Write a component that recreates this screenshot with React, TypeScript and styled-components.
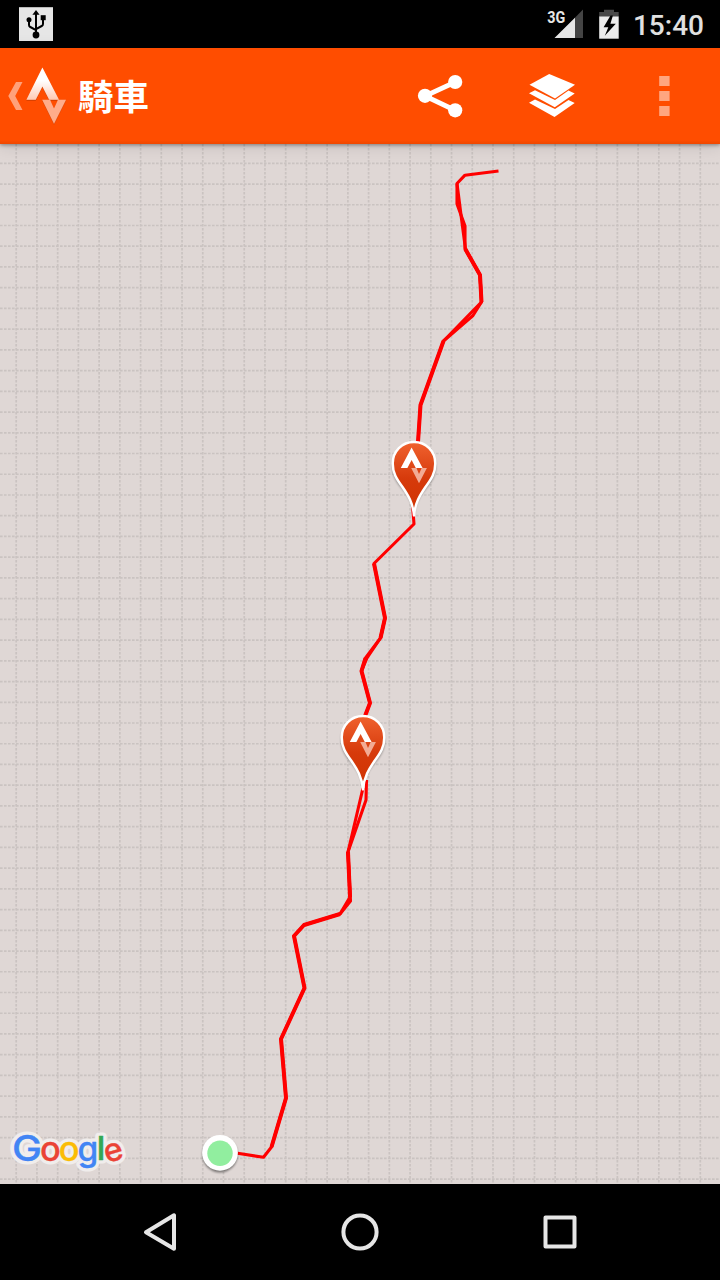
import React from "react";
import styled, { createGlobalStyle } from "styled-components";

const GlobalStyle = createGlobalStyle`
  body {
    margin: 0;
    background: #000;
  }
  svg {
    display: block;
  }
`;

const Screen = styled.div`
  width: 720px;
  height: 1280px;
  display: flex;
  flex-direction: column;
  overflow: hidden;
  font-family: Roboto, "Noto Sans CJK TC", sans-serif;
`;

const StatusBar = styled.div`
  height: 48px;
  display: flex;
  align-items: center;
  justify-content: space-between;
  padding: 0 16px 0 19px;
  background: #000;
`;

const StatusIcons = styled.div`
  display: flex;
  align-items: center;
`;

const Clock = styled.span`
  margin-left: 14px;
  padding-top: 3px;
  font-size: 28px;
  font-weight: 500;
  line-height: 45px;
  color: #e0e0e0;
`;

const ActionBar = styled.header`
  position: relative;
  z-index: 1;
  height: 96px;
  flex-shrink: 0;
  display: flex;
  align-items: center;
  justify-content: space-between;
  background: linear-gradient(#ff4d00 92px, #ee4800);
  box-shadow: 0 1px 4px rgba(0, 0, 0, 0.4), 0 2px 16px rgba(0, 0, 0, 0.12);
`;

const HomeButton = styled.div`
  display: flex;
  align-items: center;
`;

const Title = styled.h1`
  margin: 0 0 2px 10px;
  font-family: "Noto Sans CJK TC", sans-serif;
  font-size: 35.5px;
  font-weight: 700;
  line-height: 94px;
  color: #fff;
`;

const Actions = styled.div`
  display: flex;
`;

const ActionButton = styled.div`
  width: 112px;
  height: 96px;
`;

const MapArea = styled.main`
  position: relative;
  height: 1040px;
  flex-shrink: 0;
  background: #dfd7d5;
`;

const Pin = styled.svg<{ $x: number; $y: number }>`
  position: absolute;
  left: ${(p) => p.$x}px;
  top: ${(p) => p.$y}px;
`;

const NavBar = styled.nav`
  height: 96px;
  display: flex;
  align-items: center;
  justify-content: center;
  gap: 152px;
  background: #000;
`;

const GRID = 20.73;
const columns = Array.from({ length: 34 }, (_, i) => 16.2 + i * GRID);
const rows = Array.from({ length: 50 }, (_, i) => 163.3 + i * GRID);

const tracks = [
  "498.5,171 465,175.2 457,183.5 457,204 465,226 465,249 480,275 481.5,302 473,315.5 443.5,341 420.5,405 418,442",
  "457,183.5 461,215 465.5,249 480,275 481.5,302 443.5,341",
  "412.5,505 414,524 374,563.5 385,618 380.5,638 365.5,658 361.5,671 370,703 365,716",
  "385,618 380.5,638 367,658 361.5,671",
  "363,788 348,852 350,897 340,914 304,925 294,936 304.5,988 281,1039 286,1098 271.5,1147 263.5,1157.3 236,1153",
  "366.5,780 366,800 348,852 350.5,901 340,914",
];

const wideTracks = [
  "465.3,249 480,275 481.5,302",
  "443.5,341 420.5,405 418,442",
  "374,563.5 385,618 380.5,638",
  "365.5,658 361.5,671 370,703 365,716",
  "348,852 350,897",
  "340,914 304,925 294,936 304.5,988 281,1039 286,1098 271.5,1147",
];

function MapCanvas() {
  return (
    <svg width="720" height="1040" viewBox="0 144 720 1040">
      <g stroke="#cac3c1" strokeWidth="1.7" strokeDasharray="2.6 1.4">
        {columns.map((x) => (
          <line key={x} x1={x} x2={x} y1="144" y2="1184" />
        ))}
        {rows.map((y) => (
          <line key={y} x1="0" x2="720" y1={y} y2={y} />
        ))}
      </g>
      <g fill="none" stroke="#f00" strokeLinejoin="round">
        {tracks.map((points) => (
          <polyline key={points} points={points} strokeWidth="3.1" />
        ))}
        {wideTracks.map((points) => (
          <polyline key={points} points={points} strokeWidth="4" />
        ))}
      </g>
    </svg>
  );
}

function StravaPin({ x, y }: { x: number; y: number }) {
  return (
    <Pin $x={x} $y={y} width="56" height="88" viewBox="0 0 56 88">
      <defs>
        <linearGradient id="pin" x1="0" y1="0" x2="0" y2="1">
          <stop offset="0" stopColor="#f0622f" />
          <stop offset="0.5" stopColor="#d63a0b" />
          <stop offset="1" stopColor="#d03200" />
        </linearGradient>
        <filter id="soft" x="-20%" y="-20%" width="140%" height="140%">
          <feGaussianBlur stdDeviation="1.3" />
        </filter>
      </defs>
      <path
        d="M28 81C27 69 22 61 16 54C10 47 6 40 6 31C6 18 16 8 28 8S50 18 50 31C50 40 46 47 40 54C34 61 29 69 28 81Z"
        fill="#000"
        opacity="0.35"
        filter="url(#soft)"
      />
      <path
        d="M28 80.5C27 68 22 60 16.5 52C10.5 44 6.7 38 6.7 28.5C6.7 16 16 7 28 7S49.3 16 49.3 28.5C49.3 38 45.5 44 39.5 52C34 60 29 68 28 80.5Z"
        fill="url(#pin)"
        stroke="#fff"
        strokeWidth="2.5"
        strokeLinejoin="round"
      />
      <path d="M25.6 12.6L36.6 33H29.8L25.6 25L21.4 33H14.8Z" fill="#fff" />
      <path d="M25.2 33H30.5L33 39L35.7 33H40.9L33 48.3Z" fill="#f2ab94" />
    </Pin>
  );
}

function StartPoint() {
  return (
    <Pin $x={196} $y={984} width="48" height="50" viewBox="0 0 48 50">
      <circle cx="24" cy="26.8" r="17.7" fill="#000" opacity="0.45" filter="url(#soft)" />
      <circle cx="24" cy="24.8" r="17.9" fill="#fff" />
      <circle cx="24" cy="25.2" r="12.7" fill="#91ee9f" />
    </Pin>
  );
}

const letters = [
  { char: "G", x: 12, y: 36.6, color: "#4285f4", size: 36, width: 30 },
  { char: "o", x: 39.9, y: 36.8, color: "#ea4335", size: 34, width: 20.8 },
  { char: "o", x: 58.8, y: 36.8, color: "#fbbc05", size: 34, width: 20.8 },
  { char: "g", x: 77.6, y: 36.8, color: "#4285f4", size: 34, width: 20.8 },
  { char: "l", x: 96.6, y: 36, color: "#34a853", size: 33, width: 9 },
  { char: "e", x: 103.8, y: 37, color: "#ea4335", size: 32, width: 19 },
];

function GoogleLogo() {
  const text = (l: (typeof letters)[number], i: number, halo: boolean) => (
    <text
      key={i}
      x={l.x}
      y={l.y}
      fontSize={l.size}
      textLength={l.width}
      lengthAdjust="spacingAndGlyphs"
      fill={halo ? "#f0edec" : l.color}
      stroke={halo ? "#f0edec" : l.color}
      strokeWidth={halo ? 7 : 0.3}
      strokeLinejoin="round"
      transform={l.char === "e" ? "rotate(-16 113 28)" : undefined}
    >
      {l.char}
    </text>
  );
  return (
    <Pin
      $x={0}
      $y={980}
      width="140"
      height="60"
      viewBox="0 0 140 60"
      fontFamily="Inter, sans-serif"
      fontWeight="500"
    >
      {letters.map((l, i) => text(l, i, true))}
      {letters.map((l, i) => text(l, i, false))}
    </Pin>
  );
}

function UsbIcon() {
  return (
    <svg width="34" height="34" viewBox="0 0 34 34">
      <rect width="34" height="34" y="0.2" fill="#e6e6e6" />
      <g fill="none" stroke="#000" strokeWidth="2">
        <path d="M17 28V6" />
        <path d="M10 14V18Q10 19.3 11.3 20L17 23.2" />
        <path d="M24 12V17Q24 18.3 22.7 19L17 22.2" />
      </g>
      <path d="M17 3L20.6 7.8H13.4Z" />
      <circle cx="10" cy="12.8" r="2.5" />
      <rect x="21.7" y="8.2" width="5" height="5" />
      <circle cx="17" cy="28" r="3.4" />
    </svg>
  );
}

function SignalIcon() {
  return (
    <svg width="36" height="48" viewBox="547 0 36 48">
      <path d="M583 9.5V38H555Z" fill="#444" />
      <path d="M575 17.7V38H554.5Z" fill="#e6e6e6" />
      <text
        x="547.3"
        y="22.6"
        fontSize="17"
        fontWeight="700"
        fill="#e6e6e6"
        textLength="18"
        lengthAdjust="spacingAndGlyphs"
      >
        3G
      </text>
    </svg>
  );
}

const BatterySvg = styled.svg`
  margin-left: 16px;
`;

function BatteryIcon() {
  return (
    <BatterySvg width="20" height="48" viewBox="599 0 20 48">
      <path d="M604 9.7H614V12H618.7V17H599.2V12H604Z" fill="#484848" />
      <path d="M599.2 16.5H618.7V38.7H599.2Z" fill="#ececec" />
      <path d="M610.5 15.5L603.6 27.2H608.3L604.8 35.7L615.8 23.8H610.4L612.9 15.5Z" fill="#000" />
    </BatterySvg>
  );
}

function HomeIcon() {
  return (
    <svg width="68" height="96" viewBox="0 48 68 96">
      <defs>
        <linearGradient id="peak" x1="0" y1="0" x2="0" y2="1">
          <stop offset="0.4" stopColor="#fff" />
          <stop offset="1" stopColor="#ffc9b2" />
        </linearGradient>
        <filter id="logoShadow" x="-20%" y="-20%" width="140%" height="140%">
          <feDropShadow dx="0" dy="0.7" stdDeviation="0.7" floodColor="#702000" floodOpacity="0.5" />
        </filter>
      </defs>
      <path d="M16 82H22.5L15.2 96L22.5 110H16L8.3 96Z" fill="#ffa17a" />
      <g filter="url(#logoShadow)">
        <path d="M42.4 67.5L59 99.8H49.2L42.4 86.5L35.7 99.8H26.4Z" fill="url(#peak)" />
        <path d="M42.2 99.8H50L54 108.5L58 99.8H66L54 123.8Z" fill="#ffac8a" />
      </g>
    </svg>
  );
}

function ShareIcon() {
  return (
    <svg width="112" height="96" viewBox="384 48 112 96" fill="#fff">
      <path d="M455.5 82L425 96L455.5 110.5" fill="none" stroke="#fff" strokeWidth="4.8" />
      <circle cx="425" cy="95.8" r="7.1" />
      <circle cx="455.2" cy="82" r="7.1" />
      <circle cx="455.2" cy="110.3" r="7.1" />
    </svg>
  );
}

function LayersIcon() {
  return (
    <svg width="112" height="96" viewBox="496 48 112 96" fill="#fff">
      <path d="M549.2 74L575 84.8L555 98.6L529.5 84.8Z" />
      <path d="M535 90.2L529 93.3L554.8 107.2L574.7 93.4L568.5 90.4L555 100Z" />
      <path d="M535 99.6L529 102.8L554.5 117L574.7 103L568.5 99.9L555 109Z" />
    </svg>
  );
}

function OverflowIcon() {
  return (
    <svg width="112" height="96" viewBox="608 48 112 96" fill="#ffa680">
      <rect x="659.2" y="76" width="10.4" height="10" />
      <rect x="659.2" y="91" width="10.4" height="10" />
      <rect x="659.2" y="106" width="10.4" height="10" />
    </svg>
  );
}

export default function App() {
  return (
    <>
      <GlobalStyle />
      <Screen>
        <StatusBar>
          <UsbIcon />
          <StatusIcons>
            <SignalIcon />
            <BatteryIcon />
            <Clock>15:40</Clock>
          </StatusIcons>
        </StatusBar>
        <ActionBar>
          <HomeButton>
            <HomeIcon />
            <Title>騎車</Title>
          </HomeButton>
          <Actions>
            <ActionButton>
              <ShareIcon />
            </ActionButton>
            <ActionButton>
              <LayersIcon />
            </ActionButton>
            <ActionButton>
              <OverflowIcon />
            </ActionButton>
          </Actions>
        </ActionBar>
        <MapArea>
          <MapCanvas />
          <StravaPin x={386} y={291} />
          <StravaPin x={335} y={565} />
          <StartPoint />
          <GoogleLogo />
        </MapArea>
        <NavBar>
          <svg width="48" height="48" viewBox="136 1208 48 48" fill="none" stroke="#e6e6e6" strokeWidth="4" strokeLinejoin="round">
            <path d="M146 1232.2L174 1215.3V1248.7Z" />
          </svg>
          <svg width="48" height="48" viewBox="336 1208 48 48" fill="none" stroke="#e6e6e6" strokeWidth="4">
            <circle cx="360" cy="1232" r="16.6" />
          </svg>
          <svg width="48" height="48" viewBox="536 1208 48 48" fill="none" stroke="#e6e6e6" strokeWidth="4" strokeLinejoin="round">
            <rect x="545.5" y="1217.5" width="29" height="29" />
          </svg>
        </NavBar>
      </Screen>
    </>
  );
}
